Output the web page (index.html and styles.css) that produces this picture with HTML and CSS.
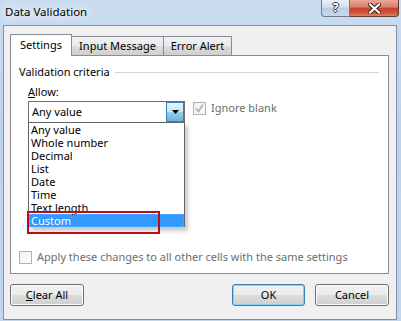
FILE: index.html
```html
<!DOCTYPE html>
<html lang="en">
<head>
  <meta charset="UTF-8" />
  <title>Data Validation</title>
  <link rel="stylesheet" href="styles.css">
</head>
<body>
  <div class="window">
    <div class="titlebar">
      <span class="title">Data Validation</span>
      <div class="caption-buttons">
        <span class="btn-help">?</span>
        <span class="btn-close">
          <svg width="13" height="11" viewBox="0 0 13 11">
            <path d="M2 1.5 L11 9.5 M11 1.5 L2 9.5" stroke="#3b2622" stroke-width="4.2" stroke-linecap="square" fill="none"/>
            <path d="M2 1.5 L11 9.5 M11 1.5 L2 9.5" stroke="#fff" stroke-width="2.2" stroke-linecap="square" fill="none"/>
          </svg>
        </span>
      </div>
    </div>

    <div class="client">
      <div class="tabs">
        <div class="tab active tab-settings">Settings</div>
        <div class="tab tab-input">Input Message</div>
        <div class="tab tab-error">Error Alert</div>
      </div>

      <div class="panel">
        <div class="group-title">
          <span>Validation criteria</span>
          <div class="rule"></div>
        </div>

        <div class="field">
          <div class="label"><u>A</u>llow:</div>
          <div class="row">
            <div class="combo-wrap">
              <div class="combo">
                <span class="combo-text">Any value</span>
                <span class="drop-btn">
                  <svg width="7" height="4" viewBox="0 0 7 4"><path d="M0 0 H7 L3.5 4 Z" fill="#000"/></svg>
                </span>
              </div>
              <ul class="list">
                <li>Any value</li>
                <li>Whole number</li>
                <li>Decimal</li>
                <li>List</li>
                <li>Date</li>
                <li>Time</li>
                <li>Text length</li>
                <li class="selected">Custom</li>
              </ul>
              <div class="callout"></div>
            </div>

            <label class="check ignore">
              <span class="box">
                <svg width="11" height="11" viewBox="0 0 11 11"><path d="M2 5.5 L4.5 8.5 L9 1.5" stroke="#b4b4b4" stroke-width="1.8" fill="none"/></svg>
              </span>
              Ignore blank
            </label>
          </div>
        </div>

        <label class="check apply">
          <span class="box"></span>
          Apply these changes to all other cells with the same settings
        </label>
      </div>

      <div class="buttons">
        <button class="btn btn-clear"><u>C</u>lear All</button>
        <button class="btn btn-ok">OK</button>
        <button class="btn btn-cancel">Cancel</button>
      </div>
    </div>
  </div>
</body>
</html>
```

FILE: styles.css
```css
body {
  margin: 0;
  font-family: "Noto Sans", sans-serif;
  font-size: 11px;
  color: #000;
}
.window {
  width: 401px;
  height: 321px;
  overflow: hidden;
  background: linear-gradient(#cadcf0, #bcd2ea 40%, #c2d7ee);
}

/* title bar */
.titlebar {
  height: 25px;
  display: flex;
  justify-content: space-between;
  align-items: flex-start;
}
.title {
  padding: 4px 0 0 5px;
  font-size: 11.5px;
  line-height: 16px;
  text-shadow: 0 0 6px #fff, 0 0 10px #fff, 0 0 14px #fff;
}
.caption-buttons {
  display: flex;
  margin-right: 2px;
}
.btn-help {
  width: 29px;
  height: 17px;
  box-sizing: border-box;
  border: 1px solid #6c7a8c;
  border-top: none;
  border-radius: 0 0 0 4px;
  background: linear-gradient(#e8eef6, #d5e0ec 45%, #bccde0 50%, #c9d9ea);
  color: #fff;
  font-weight: bold;
  font-size: 12px;
  line-height: 16px;
  text-align: center;
  text-shadow: 1px 0 0 #354355, -1px 0 0 #354355, 0 1px 0 #354355, 0 -1px 0 #354355;
}
.btn-close {
  width: 49px;
  height: 17px;
  box-sizing: border-box;
  border: 1px solid #5e3b35;
  border-top: none;
  border-left: none;
  border-radius: 0 0 4px 0;
  background: linear-gradient(#e9a799, #d9806c 45%, #c4402a 50%, #cf5438 80%, #df8266);
  display: flex;
  align-items: center;
  justify-content: center;
}

/* client area */
.client {
  width: 394px;
  height: 295px;
  box-sizing: border-box;
  margin-left: 3px;
  border: 1px solid #7f91a6;
  background: #f0f0f0;
  padding: 8px 7px 13px 6px;
}

.tabs {
  display: flex;
  align-items: flex-end;
  height: 21px;
}
.tab {
  height: 19px;
  box-sizing: border-box;
  border: 1px solid #898c95;
  border-bottom: none;
  margin-left: -1px;
  background: linear-gradient(#f2f2f2, #ebebeb 50%, #dddddd 50%, #cfcfcf);
  line-height: 18px;
  text-align: center;
}
.tab.active {
  position: relative;
  z-index: 2;
  height: 22px;
  margin-left: 0;
  margin-bottom: -1px;
  background: #fff;
  line-height: 19px;
}
.tab-settings { width: 62px; }
.tab-input { width: 93px; }
.tab-error { width: 69px; }

.panel {
  height: 219px;
  box-sizing: border-box;
  border: 1px solid #898c95;
  background: #fff;
  padding: 8px 9px 8px 8px;
  display: flex;
  flex-direction: column;
}
.group-title {
  display: flex;
  align-items: center;
  line-height: 16px;
}
.rule {
  flex: 1;
  height: 1px;
  margin-left: 5px;
  background: #d5d5d5;
}

.field {
  margin: 4px 0 0 9px;
}
.label {
  line-height: 16px;
}
.row {
  display: flex;
  align-items: flex-start;
  margin-top: 1px;
}

.combo-wrap {
  position: relative;
  width: 157px;
}
.combo {
  height: 22px;
  box-sizing: border-box;
  border: 1px solid #707070;
  display: flex;
  justify-content: space-between;
  background: #fff;
}
.combo-text {
  padding-left: 3px;
  line-height: 20px;
}
.drop-btn {
  width: 18px;
  box-sizing: border-box;
  border: 1px solid #3c7fb1;
  background: linear-gradient(#e5f4fc, #c4e5f6 50%, #98d1ef 50%, #68b3db);
  display: flex;
  align-items: center;
  justify-content: center;
}

.list {
  position: absolute;
  top: 21px;
  left: 0;
  width: 157px;
  box-sizing: border-box;
  margin: 0;
  padding: 0;
  list-style: none;
  background: #fff;
  border: 1px solid #646464;
  border-bottom: none;
  box-shadow: 3px 4px 4px rgba(0, 0, 0, 0.22);
  z-index: 3;
}
.list li {
  line-height: 13px;
  height: 13px;
  padding-left: 2px;
  white-space: nowrap;
}
.list li.selected {
  background: #3399ff;
  color: #fff;
  outline: 1px dotted #c9995f;
  outline-offset: -1px;
}
.callout {
  position: absolute;
  left: -1px;
  top: 110px;
  width: 133px;
  height: 23px;
  box-sizing: border-box;
  border: 2px solid #bb0d16;
  z-index: 4;
}

.check {
  display: flex;
  align-items: center;
  gap: 5px;
  color: #6d6d6d;
  line-height: 16px;
}
.box {
  width: 13px;
  height: 13px;
  box-sizing: border-box;
  border: 1px solid #b1b1b1;
  background: linear-gradient(135deg, #f0f0f0, #fcfcfc);
  display: flex;
  align-items: center;
  justify-content: center;
}
.ignore {
  margin-left: 8px;
  margin-top: -1px;
}
.apply {
  margin-top: auto;
}

.buttons {
  display: flex;
  gap: 10px;
  margin-top: 10px;
}
.btn {
  height: 22px;
  box-sizing: border-box;
  border: 1px solid #707070;
  border-radius: 3px;
  background: linear-gradient(#f2f2f2, #ebebeb 50%, #dddddd 50%, #cfcfcf);
  box-shadow: inset 0 0 0 1px #fbfbfb;
  font-family: "Noto Sans", sans-serif;
  font-size: 11px;
  line-height: 18px;
  color: #000;
  padding: 0;
}
.btn-clear { width: 74px; }
.btn-ok {
  width: 73px;
  margin-left: auto;
  border-color: #3c7fb1;
  box-shadow: inset 0 0 0 1px #7fd3f5;
}
.btn-cancel { width: 74px; }
```
